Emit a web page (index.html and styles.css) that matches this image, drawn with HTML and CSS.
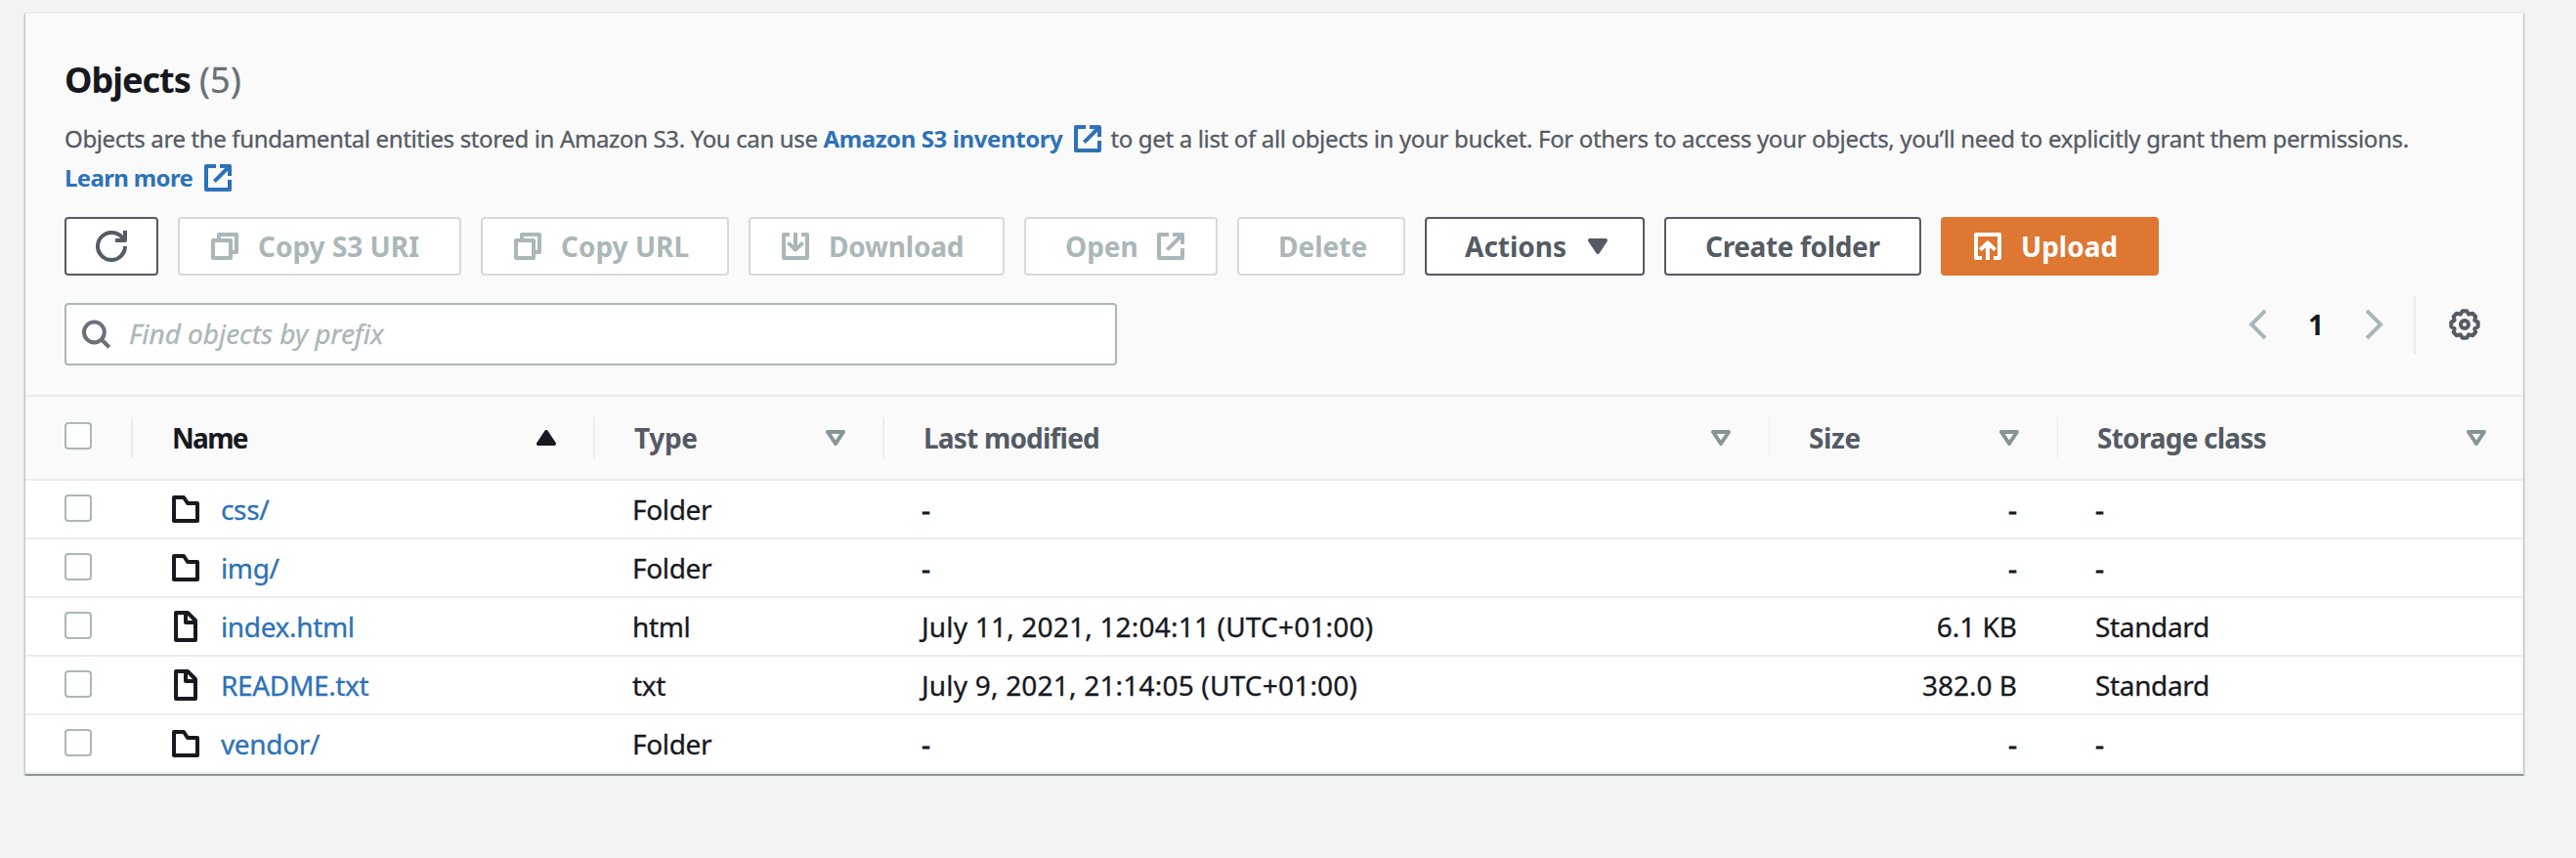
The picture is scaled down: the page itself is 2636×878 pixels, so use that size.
FILE: index.html
```html
<!DOCTYPE html>
<html lang="en">
<head>
<meta charset="utf-8">
<title>Objects</title>
<link rel="stylesheet" href="styles.css">
</head>
<body>
<svg class="sprite" aria-hidden="true">
  <symbol id="external" viewBox="0 0 16 16"><path d="M7 2H2v12h12V9M9 2h5v5M14 2l-7.8 7.8"/></symbol>
  <symbol id="copy" viewBox="0 0 16 16"><path d="M2 5h9v9H2zM5 4V2h9v9h-2"/></symbol>
  <symbol id="download" viewBox="0 0 16 16"><path d="M5 2H2v12h12V2h-3M8 1v8.5M4.2 6.2L8 9.8l3.8-3.6"/></symbol>
  <symbol id="upload" viewBox="0 0 16 16"><path d="M5 14H2V2h12v12h-3M8 15V6.5M4.2 9.8L8 6.2l3.8 3.6"/></symbol>
  <symbol id="refresh" viewBox="0 0 16 16"><path d="M15 8A7 7 0 1 1 8 1c3 0 5.200 1.500 6.500 4M15 0v5h-5"/></symbol>
  <symbol id="search" viewBox="0 0 16 16"><circle cx="7.200" cy="7" r="5.200"/><path d="M10.800 10.600l4.100 4"/></symbol>
  <symbol id="gear" viewBox="0 0 16 16"><path d="M14.860 6.900V9.100L13.170 10.140L13.620 12.090L12.090 13.620L10.140 13.170L9.100 14.860H6.900L5.860 13.170L3.910 13.620L2.380 12.090L2.830 10.140L1.140 9.100V6.900L2.830 5.860L2.380 3.910L3.910 2.380L5.860 2.830L6.900 1.140H9.100L10.140 2.830L12.090 2.380L13.620 3.910L13.170 5.860z"/><circle cx="8" cy="8" r="2"/></symbol>
  <symbol id="folder" viewBox="0 0 16 16"><path d="M2 2h5l2 3h5v9H2z"/></symbol>
  <symbol id="file" viewBox="0 0 16 16"><path d="M3 1h6l4 4v10H3zM8 1v5h5"/></symbol>
  <symbol id="caret-open" viewBox="0 0 20 16"><path d="M2 2h16l-8 12z"/></symbol>
</svg>

<main class="panel">
  <header class="panel-head">
    <h2 class="title">Objects <span class="count">(5)</span></h2>
    <p class="description"><span class="desc-a">Objects are the fundamental entities stored in Amazon S3. You can use </span><a class="link inventory">Amazon S3 inventory</a><svg class="icon ext"><use href="#external"/></svg><span class="desc-b">to get a list of all objects in your bucket. For others to access your objects, you’ll need to explicitly grant them permissions.</span><br><a class="link learn">Learn more</a><svg class="icon ext"><use href="#external"/></svg></p>

    <div class="toolbar">
      <button class="btn refresh"><svg class="icon"><use href="#refresh"/></svg></button>
      <button class="btn disabled copy-uri"><svg class="icon"><use href="#copy"/></svg><span>Copy S3 URI</span></button>
      <button class="btn disabled copy-url"><svg class="icon"><use href="#copy"/></svg><span>Copy URL</span></button>
      <button class="btn disabled download"><svg class="icon"><use href="#download"/></svg><span>Download</span></button>
      <button class="btn disabled open"><span>Open</span><svg class="icon"><use href="#external"/></svg></button>
      <button class="btn disabled delete"><span>Delete</span></button>
      <button class="btn actions"><span>Actions</span><svg class="caret solid" viewBox="0 0 20 16"><path d="M2 2h16l-8 12z"/></svg></button>
      <button class="btn create"><span>Create folder</span></button>
      <button class="btn primary"><svg class="icon"><use href="#upload"/></svg><span>Upload</span></button>
    </div>

    <div class="filter-row">
      <div class="search"><svg class="icon"><use href="#search"/></svg><span>Find objects by prefix</span></div>
      <div class="tools">
        <svg class="chevron" viewBox="0 0 18 32"><path d="M17 2L3 16l14 14"/></svg>
        <span class="page">1</span>
        <svg class="chevron" viewBox="0 0 18 32"><path d="M1 2l14 14L1 30"/></svg>
        <span class="rule"></span>
        <svg class="icon gear"><use href="#gear"/></svg>
      </div>
    </div>
  </header>

  <section class="table">
    <div class="row head">
      <div class="cell check"><i class="box"></i></div>
      <div class="cell sorted"><span class="h-name">Name</span><svg class="caret solid" viewBox="0 0 20 16"><path d="M2 14h16L10 2z"/></svg></div>
      <div class="cell"><span class="h-type">Type</span><svg class="caret"><use href="#caret-open"/></svg></div>
      <div class="cell"><span class="h-long">Last modified</span><svg class="caret"><use href="#caret-open"/></svg></div>
      <div class="cell"><span>Size</span><svg class="caret"><use href="#caret-open"/></svg></div>
      <div class="cell last"><span class="h-long">Storage class</span><svg class="caret"><use href="#caret-open"/></svg></div>
    </div>
    <div class="row">
      <div class="cell check"><i class="box"></i></div>
      <div class="cell name"><svg class="icon"><use href="#folder"/></svg><a>css/</a></div>
      <div class="cell">Folder</div><div class="cell dash">-</div><div class="cell size dash">-</div><div class="cell dash">-</div>
    </div>
    <div class="row">
      <div class="cell check"><i class="box"></i></div>
      <div class="cell name"><svg class="icon"><use href="#folder"/></svg><a>img/</a></div>
      <div class="cell">Folder</div><div class="cell dash">-</div><div class="cell size dash">-</div><div class="cell dash">-</div>
    </div>
    <div class="row">
      <div class="cell check"><i class="box"></i></div>
      <div class="cell name"><svg class="icon"><use href="#file"/></svg><a>index.html</a></div>
      <div class="cell">html</div><div class="cell date">July 11, 2021, 12:04:11 (UTC+01:00)</div><div class="cell size">6.1 KB</div><div class="cell">Standard</div>
    </div>
    <div class="row">
      <div class="cell check"><i class="box"></i></div>
      <div class="cell name"><svg class="icon"><use href="#file"/></svg><a>README.txt</a></div>
      <div class="cell">txt</div><div class="cell date">July 9, 2021, 21:14:05 (UTC+01:00)</div><div class="cell size">382.0 B</div><div class="cell">Standard</div>
    </div>
    <div class="row">
      <div class="cell check"><i class="box"></i></div>
      <div class="cell name"><svg class="icon"><use href="#folder"/></svg><a>vendor/</a></div>
      <div class="cell">Folder</div><div class="cell dash">-</div><div class="cell size dash">-</div><div class="cell dash">-</div>
    </div>
  </section>
</main>
</body>
</html>
```
FILE: styles.css
```css
* { box-sizing: border-box; }

body {
  margin: 0;
  padding: 12px 54px 0 26px;
  background: #f2f3f3;
  color: #16191f;
  font: 28px/40px "Noto Sans", "Open Sans", sans-serif;
}

.sprite { display: none; }

.panel {
  background: #fff;
  border-top: 2px solid #eaeded;
  border-bottom: 2px solid #8a9799;
  box-shadow: 0 1px 1px 0 rgba(0, 28, 36, .3), 1px 2px 2px 0 rgba(0, 28, 36, .22), -1px 2px 2px 0 rgba(0, 28, 36, .22);
}

.panel-head {
  height: 392px;
  padding: 43px 40px 0;
  background: #fafafa;
  border-bottom: 2px solid #eaeded;
}

.title { margin: 0 0 15px; font-size: 36px; line-height: 50px; letter-spacing: -1px; }
.count { margin-left: 1px; font-weight: 400; color: #687078; letter-spacing: .2px; -webkit-text-stroke: .3px; }

.description { margin: 0; height: 80px; font-size: 24px; line-height: 40px; color: #545b64; white-space: nowrap; }
.desc-a, .desc-b { letter-spacing: -.34px; -webkit-text-stroke: .3px; }
.desc-a { white-space: pre; letter-spacing: -.36px; }
.link { color: #2d72b8; font-weight: 700; letter-spacing: -.4px; }
.learn { letter-spacing: -.65px; }
.ext { color: #2d72b8; margin: 0 7px 0 10px; vertical-align: -7px; }

.icon {
  width: 32px;
  height: 32px;
  flex: none;
  fill: none;
  stroke: currentColor;
  stroke-width: 2;
  stroke-linejoin: round;
}

.caret {
  width: 20px;
  height: 16px;
  flex: none;
  fill: none;
  stroke: currentColor;
  stroke-width: 4;
  stroke-linejoin: round;
}
.caret.solid { fill: currentColor; }

.toolbar { display: flex; gap: 20px; margin-top: 20px; }

.btn {
  display: flex;
  align-items: center;
  height: 60px;
  padding: 0 0 0 30px;
  border: 2px solid #545b64;
  border-radius: 4px;
  background: #fff;
  color: #545b64;
  font: inherit;
  font-weight: 700;
  white-space: nowrap;
}
.btn span { padding-bottom: 1px; }
.btn .icon + span { margin-left: 18px; }
.disabled { border-color: #d5dbdb; color: #aab7b8; }
.refresh { width: 96px; }
.copy-uri { width: 290px; }
.copy-url { width: 254px; }
.download { width: 262px; letter-spacing: -.2px; }
.open { width: 198px; justify-content: space-between; padding: 0 30px 0 40px; }
.delete { width: 172px; padding-left: 40px; }
.actions { width: 225px; justify-content: space-between; padding: 0 36px 0 39px; }
.create { width: 263px; padding-left: 40px; letter-spacing: -.35px; }
.primary { width: 223px; border-color: #dd7732; background: #dd7732; color: #fff; }

.filter-row { display: flex; justify-content: space-between; margin-top: 20px; }

.search {
  display: flex;
  align-items: center;
  width: 1077px;
  height: 64px;
  margin-top: 8px;
  padding-left: 14px;
  border: 2px solid #aab7b8;
  border-radius: 4px;
  background: #fff;
  color: #687078;
}
.search span { margin-left: 18px; padding-bottom: 2px; color: #aab7b8; font-style: italic; letter-spacing: -.04px; -webkit-text-stroke: .3px; }

.tools { display: flex; align-items: center; height: 60px; padding-right: 4px; }
.chevron { width: 18px; height: 32px; fill: none; stroke: #aab7b8; stroke-width: 4; }
.page { width: 102px; text-align: center; font-weight: 700; padding-bottom: 1px; }
.rule { width: 2px; height: 60px; margin: 0 34px 0 31px; background: #eaeded; }
.gear { color: #545b64; }

.row {
  display: grid;
  grid-template-columns: 110px 473px 296px 906px 295px 476px;
  height: 60px;
  border-bottom: 2px solid #eaeded;
  letter-spacing: -.35px;
}
.cell { display: flex; align-items: center; padding-left: 38px; white-space: nowrap; }
.row:not(.head) .cell { -webkit-text-stroke: .3px; }
.row .cell.dash { -webkit-text-stroke: .8px; }
.check { padding-left: 40px; }
.row:not(.head) .box { margin-bottom: 2px; }
.box { width: 28px; height: 28px; border: 2px solid #aab7b8; border-radius: 4px; background: #fff; }
.name .icon { margin-right: 20px; }
.name a { color: #2d72b8; }
.row .date { letter-spacing: .2px; }
.row .size { justify-content: flex-end; padding-right: 42px; letter-spacing: 0; }

.head { height: 86px; background: #fafafa; color: #545b64; font-weight: 700; }
.head .cell {
  height: 42px;
  margin-top: 21px;
  padding: 0 38px 0 40px;
  justify-content: space-between;
  border-right: 2px solid #eaeded;
}
.head .cell:nth-child(n+4) { border-right-width: 1px; padding-right: 39px; }
.head .cell.last { border-right: 0; padding-right: 38px; }
.head span { padding-bottom: 1px; }
.h-name { letter-spacing: -1.7px; }
.h-long { letter-spacing: -.8px; }
.head .box { margin-bottom: 4px; }
.head .caret { color: #879596; }
.head .sorted, .head .sorted .caret { color: #16191f; }
```
